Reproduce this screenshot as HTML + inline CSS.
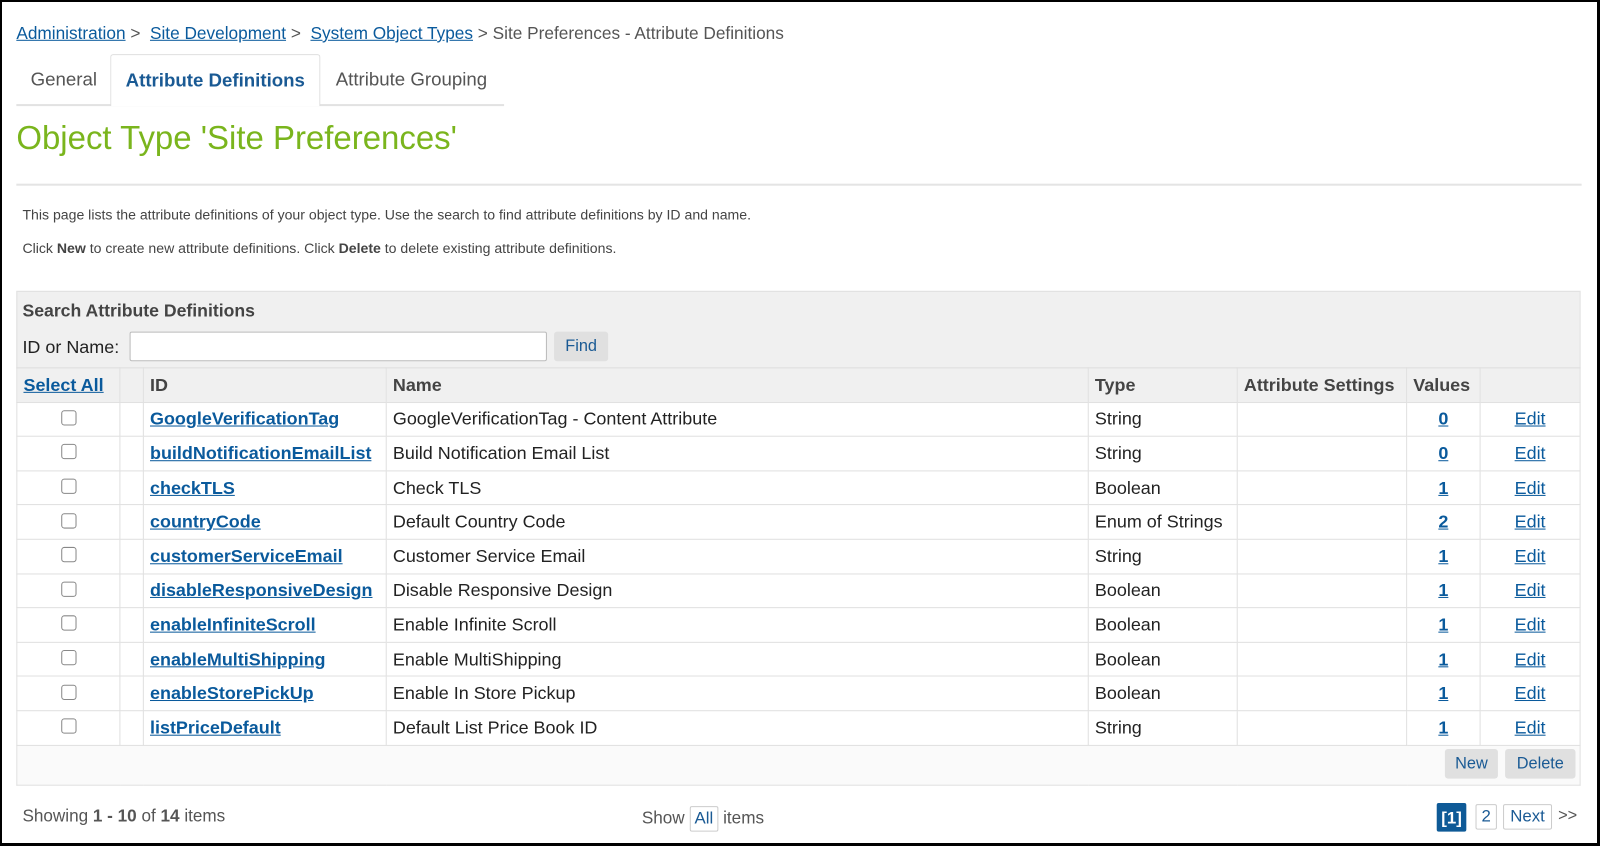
<!DOCTYPE html>
<html><head><meta charset="utf-8"><style>
*{box-sizing:border-box}
html,body{margin:0;padding:0;width:1600px;height:846px;overflow:hidden;background:#000}
.frame{position:absolute;left:2px;top:2px;width:1595px;height:841px;background:#fff;overflow:hidden}
.inner{position:absolute;left:-2px;top:-2px;width:1568px;height:829px;transform:scale(1.0204);transform-origin:0 0;font-family:"Liberation Sans",sans-serif;color:#333}
.a{position:absolute}
a{color:#0a5a9c;text-decoration:underline}
.bc{left:16px;top:23px;font-size:16.9px;color:#555;white-space:nowrap}
.tab{top:60px;height:42px;font-size:18.3px;line-height:36px;color:#555}
h1{position:absolute;left:16px;top:117px;margin:0;font-weight:normal;font-size:32.3px;color:#7ab51d}
.small{font-size:13.8px;color:#444;left:22px}
table{border-collapse:collapse;position:absolute;left:16px;top:360px;width:1533px;font-size:17.6px}
td,th{border:1px solid #e0e0e0;height:33.6px;padding:0 6px;text-align:left;color:#222}
th{background:#f0f0f0;font-weight:bold;color:#444}
td.id a{font-weight:bold}
.cb{display:inline-block;width:15px;height:15px;border:1px solid #888;border-radius:3px;background:#fff;margin-top:2px}
.btn{background:#e0e0e0;color:#1a5a94;border-radius:3px;font-size:16px;height:29px;line-height:29px;text-align:center}
.pg{border:1px solid #ccc;border-radius:2px;height:25px;line-height:23px;font-size:16.5px;color:#1a5a94;text-align:center}
</style></head><body><div class="frame"><div class="inner">
<div class="a bc"><a href="#">Administration</a> &gt;&nbsp; <a href="#">Site Development</a> &gt;&nbsp; <a href="#">System Object Types</a> &gt; Site Preferences - Attribute Definitions</div>
<div class="a" style="left:16px;top:102px;width:478px;height:2px;background:#e2e2e2"></div>
<div class="a tab" style="left:30px">General</div>
<div class="a tab" style="left:108px;width:206px;border:1px solid #ddd;border-bottom:none;background:#fff;text-align:center;color:#1a5a94;font-weight:bold;top:53px;height:51px;line-height:50px;border-radius:3px 3px 0 0">Attribute Definitions</div>
<div class="a tab" style="left:329px">Attribute Grouping</div>
<h1>Object Type 'Site Preferences'</h1>
<div class="a" style="left:16px;top:180px;width:1534px;height:2px;background:#e4e4e4"></div>
<div class="a small" style="top:203px">This page lists the attribute definitions of your object type. Use the search to find attribute definitions by ID and name.</div>
<div class="a small" style="top:236px">Click <b>New</b> to create new attribute definitions. Click <b>Delete</b> to delete existing attribute definitions.</div>
<div class="a" style="left:16px;top:285px;width:1533px;height:76px;background:#f0f0f0;border:1px solid #e0e0e0"></div>
<div class="a" style="left:22px;top:294px;font-size:17.3px;font-weight:bold;color:#444">Search Attribute Definitions</div>
<div class="a" style="left:22px;top:330px;font-size:17.6px;color:#222">ID or Name:</div>
<div class="a" style="left:127px;top:325px;width:409px;height:29px;background:#fff;border:1px solid #bbb;border-radius:2px"></div>
<div class="a btn" style="left:543px;top:325px;width:53px">Find</div>
<table>
<tr><th style="width:101px"><a href="#">Select All</a></th><th style="width:23px"></th><th style="width:238px">ID</th><th style="width:688px">Name</th><th style="width:146px">Type</th><th style="width:166px">Attribute Settings</th><th style="width:72px">Values</th><th></th></tr>
<tr><td style="text-align:center"><span class="cb"></span></td><td></td><td class="id"><a href="#">GoogleVerificationTag</a></td><td>GoogleVerificationTag - Content Attribute</td><td>String</td><td></td><td style="text-align:center"><a href="#"><b>0</b></a></td><td style="text-align:center"><a href="#">Edit</a></td></tr>
<tr><td style="text-align:center"><span class="cb"></span></td><td></td><td class="id"><a href="#">buildNotificationEmailList</a></td><td>Build Notification Email List</td><td>String</td><td></td><td style="text-align:center"><a href="#"><b>0</b></a></td><td style="text-align:center"><a href="#">Edit</a></td></tr>
<tr><td style="text-align:center"><span class="cb"></span></td><td></td><td class="id"><a href="#">checkTLS</a></td><td>Check TLS</td><td>Boolean</td><td></td><td style="text-align:center"><a href="#"><b>1</b></a></td><td style="text-align:center"><a href="#">Edit</a></td></tr>
<tr><td style="text-align:center"><span class="cb"></span></td><td></td><td class="id"><a href="#">countryCode</a></td><td>Default Country Code</td><td>Enum of Strings</td><td></td><td style="text-align:center"><a href="#"><b>2</b></a></td><td style="text-align:center"><a href="#">Edit</a></td></tr>
<tr><td style="text-align:center"><span class="cb"></span></td><td></td><td class="id"><a href="#">customerServiceEmail</a></td><td>Customer Service Email</td><td>String</td><td></td><td style="text-align:center"><a href="#"><b>1</b></a></td><td style="text-align:center"><a href="#">Edit</a></td></tr>
<tr><td style="text-align:center"><span class="cb"></span></td><td></td><td class="id"><a href="#">disableResponsiveDesign</a></td><td>Disable Responsive Design</td><td>Boolean</td><td></td><td style="text-align:center"><a href="#"><b>1</b></a></td><td style="text-align:center"><a href="#">Edit</a></td></tr>
<tr><td style="text-align:center"><span class="cb"></span></td><td></td><td class="id"><a href="#">enableInfiniteScroll</a></td><td>Enable Infinite Scroll</td><td>Boolean</td><td></td><td style="text-align:center"><a href="#"><b>1</b></a></td><td style="text-align:center"><a href="#">Edit</a></td></tr>
<tr><td style="text-align:center"><span class="cb"></span></td><td></td><td class="id"><a href="#">enableMultiShipping</a></td><td>Enable MultiShipping</td><td>Boolean</td><td></td><td style="text-align:center"><a href="#"><b>1</b></a></td><td style="text-align:center"><a href="#">Edit</a></td></tr>
<tr><td style="text-align:center"><span class="cb"></span></td><td></td><td class="id"><a href="#">enableStorePickUp</a></td><td>Enable In Store Pickup</td><td>Boolean</td><td></td><td style="text-align:center"><a href="#"><b>1</b></a></td><td style="text-align:center"><a href="#">Edit</a></td></tr>
<tr><td style="text-align:center"><span class="cb"></span></td><td></td><td class="id"><a href="#">listPriceDefault</a></td><td>Default List Price Book ID</td><td>String</td><td></td><td style="text-align:center"><a href="#"><b>1</b></a></td><td style="text-align:center"><a href="#">Edit</a></td></tr>
<tr><td colspan="8" style="height:39px;background:#fafafa"></td></tr>
</table>
<div class="a btn" style="left:1416px;top:734px;width:52px">New</div>
<div class="a btn" style="left:1475px;top:734px;width:69px">Delete</div>
<div class="a" style="left:22px;top:790px;font-size:16.8px;color:#555">Showing <b>1 - 10</b> of <b>14</b> items</div>
<div class="a" style="left:629px;top:790px;font-size:16.8px;color:#555">Show <span class="pg" style="display:inline-block;padding:0 4px">All</span> items</div>
<div class="a pg" style="left:1408px;top:787px;width:29px;height:28px;line-height:28px;background:#0e5a97;color:#fff;border-color:#0e5a97;font-weight:bold">[1]</div>
<div class="a pg" style="left:1446px;top:788px;width:21px">2</div>
<div class="a pg" style="left:1473px;top:788px;width:48px">Next</div>
<div class="a" style="left:1527px;top:791px;font-size:16px;color:#555">&gt;&gt;</div>
</div></div></body></html>
